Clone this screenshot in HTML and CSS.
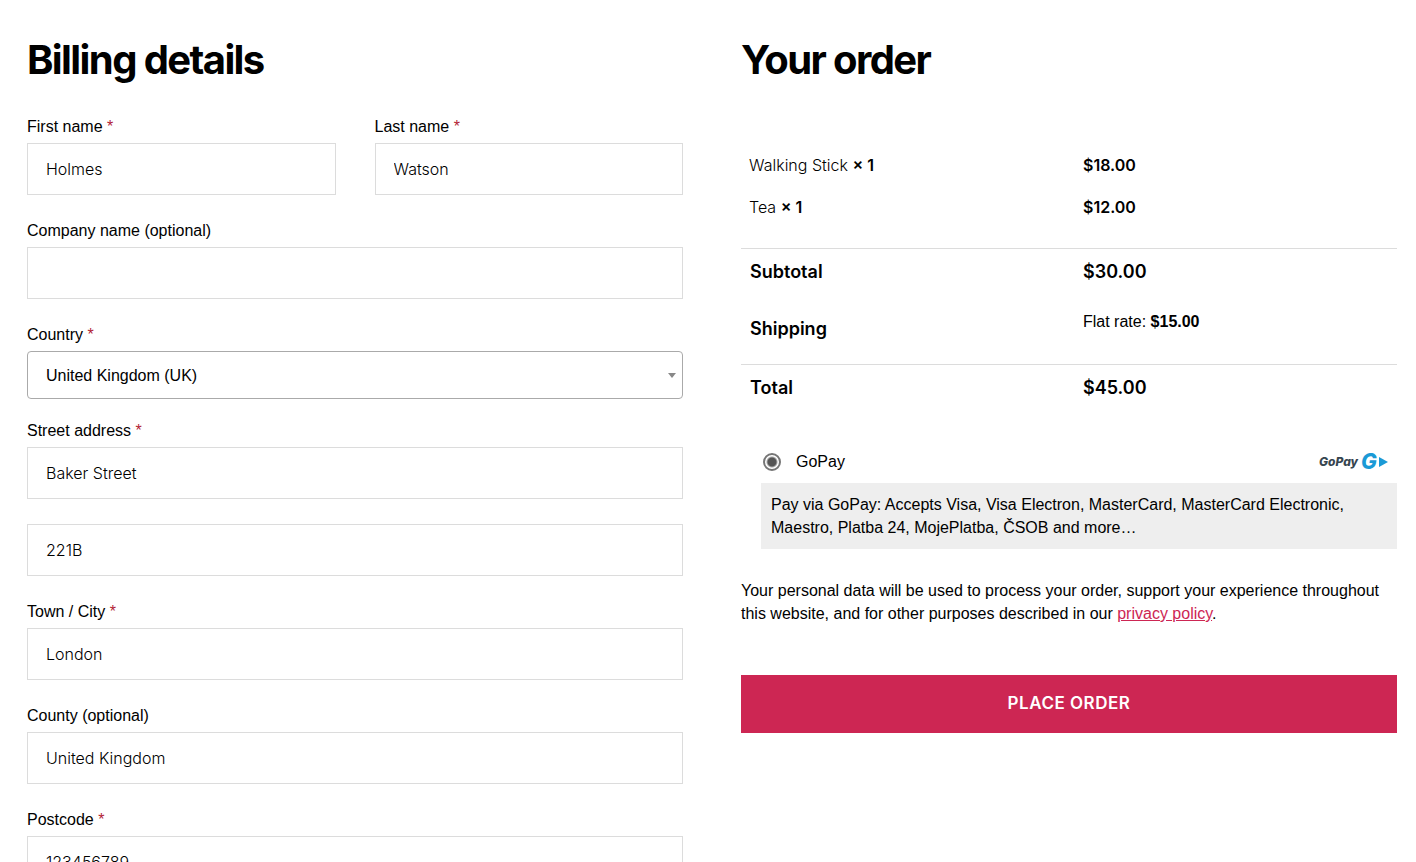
FILE: index.html
```html
<!DOCTYPE html>
<html lang="en">
<head>
  <meta charset="UTF-8">
  <meta name="viewport" content="width=device-width, initial-scale=1.0">
  <title>Checkout</title>
  <link rel="stylesheet" href="styles.css">
</head>
<body>

  <form class="checkout">
    <!-- Billing details -->
    <section class="column">
      <h2>Billing details</h2>

      <div class="field-row">
        <div class="field">
          <label for="firstName">First name <span class="required">*</span></label>
          <input type="text" id="firstName" value="Holmes">
        </div>
        <div class="field">
          <label for="lastName">Last name <span class="required">*</span></label>
          <input type="text" id="lastName" value="Watson">
        </div>
      </div>

      <div class="field">
        <label for="company">Company name (optional)</label>
        <input type="text" id="company">
      </div>

      <div class="field field-select">
        <label for="country">Country <span class="required">*</span></label>
        <div class="select-wrap">
          <select id="country">
            <option selected>United Kingdom (UK)</option>
          </select>
        </div>
      </div>

      <div class="field">
        <label for="address1">Street address <span class="required">*</span></label>
        <input type="text" id="address1" value="Baker Street">
      </div>

      <div class="field">
        <input type="text" id="address2" value="221B" aria-label="Apartment">
      </div>

      <div class="field">
        <label for="city">Town / City <span class="required">*</span></label>
        <input type="text" id="city" value="London">
      </div>

      <div class="field">
        <label for="county">County (optional)</label>
        <input type="text" id="county" value="United Kingdom">
      </div>

      <div class="field">
        <label for="postcode">Postcode <span class="required">*</span></label>
        <input type="text" id="postcode" value="123456789">
      </div>
    </section>

    <!-- Order review -->
    <section class="column">
      <h2>Your order</h2>

      <table class="order-table">
        <tbody>
          <tr>
            <td>Walking Stick <strong>× 1</strong></td>
            <td><strong>$18.00</strong></td>
          </tr>
          <tr>
            <td>Tea <strong>× 1</strong></td>
            <td><strong>$12.00</strong></td>
          </tr>
        </tbody>
        <tfoot>
          <tr class="line">
            <th>Subtotal</th>
            <td>$30.00</td>
          </tr>
          <tr class="shipping">
            <th>Shipping</th>
            <td>Flat rate: <strong>$15.00</strong></td>
          </tr>
          <tr class="line">
            <th>Total</th>
            <td>$45.00</td>
          </tr>
        </tfoot>
      </table>

      <div class="payment">
        <div class="payment-method">
          <input type="radio" id="gopay" name="payment" checked>
          <label for="gopay">GoPay</label>
          <svg class="gopay-logo" width="70" height="32" viewBox="0 0 70 32" aria-hidden="true">
            <text class="logo-name" x="1" y="20">GoPay</text>
            <text class="logo-mark" x="43" y="23">G</text>
            <path d="M61 11 L70 16 L61 21 Z" fill="#1b9ad6"/>
          </svg>
        </div>
        <p class="payment-box">Pay via GoPay: Accepts Visa, Visa Electron, MasterCard, MasterCard Electronic, Maestro, Platba 24, MojePlatba, ČSOB and more…</p>
      </div>

      <p class="privacy">Your personal data will be used to process your order, support your experience throughout this website, and for other purposes described in our <a href="#">privacy policy</a>.</p>

      <button type="submit" class="place-order">Place order</button>
    </section>
  </form>

</body>
</html>
```
FILE: styles.css
```css
* {
  box-sizing: border-box;
}

body {
  margin: 0;
  background-color: #fff;
  color: #000;
  font-family: "Liberation Sans", Arial, sans-serif;
  font-size: 16px;
  line-height: 23px;
}

h2 {
  margin: 0 0 32px;
  font-family: Inter, sans-serif;
  font-size: 40px;
  font-weight: 700;
  line-height: 48px;
  letter-spacing: -0.04em;
}

p {
  margin: 0;
}

/* Two equal columns */
.checkout {
  display: flex;
  gap: 58px;
  padding: 36px 19px 0 27px;
}

.column {
  flex: 1;
  min-width: 0;
}

/* Form fields */
.field-row {
  display: flex;
  gap: 39px;
}

.field {
  flex: 1;
  margin-bottom: 25px;
}

.field-select {
  margin-bottom: 21px;
}

.field label {
  display: block;
  margin-bottom: 6px;
  line-height: 21px;
}

.required {
  color: #b22234;
}

.field input {
  display: block;
  width: 100%;
  height: 52px;
  padding: 0 18px;
  border: 1px solid #dcdcdc;
  border-radius: 0;
  background-color: #fff;
  color: #000;
  font-family: Inter, sans-serif;
  font-size: 16px;
  font-weight: 300;
}

.select-wrap {
  position: relative;
}

.field select {
  display: block;
  width: 100%;
  height: 48px;
  padding: 0 18px;
  border: 1px solid #aaa;
  border-radius: 4px;
  appearance: none;
  background-color: #fff;
  color: #000;
  font-family: inherit;
  font-size: 16px;
}

/* Small arrow of the select */
.select-wrap::after {
  content: "";
  position: absolute;
  top: 22px;
  right: 7px;
  border: 4px solid transparent;
  border-top: 5px solid #888;
  border-bottom: 0;
  pointer-events: none;
}

/* Order table */
.order-table {
  width: 100%;
  margin-top: 60px;
  border-collapse: collapse;
  table-layout: fixed;
  font-family: Inter, sans-serif;
}

.order-table th,
.order-table td {
  width: 50%;
  height: 42px;
  padding: 0 9px;
  text-align: left;
}

.order-table td + td,
.order-table th + td {
  padding-left: 14px;
}

.order-table tbody td {
  font-weight: 300;
}

.order-table tbody td:first-child {
  padding-left: 8px;
}

.order-table tbody strong {
  font-weight: 600;
}

.order-table tbody tr:last-child td {
  height: 62px;
  padding-bottom: 18px;
}

.order-table tfoot th,
.order-table tfoot td {
  height: 46px;
  font-size: 18px;
  font-weight: 600;
}

.order-table .line {
  border-top: 1px solid #dcdcdc;
}

.order-table .shipping th {
  height: 70px;
}

.order-table .shipping td {
  padding-bottom: 14px;
  font-family: "Liberation Sans", Arial, sans-serif;
  font-size: 16px;
  font-weight: 400;
}

.order-table .shipping strong {
  font-weight: 700;
}

/* Payment method */
.payment {
  margin: 40px 0 30px 20px;
}

.payment-method {
  display: flex;
  align-items: center;
  height: 23px;
  margin-bottom: 10px;
  padding: 0 9px 0 2px;
}

.payment-method input {
  appearance: none;
  width: 18px;
  height: 18px;
  margin: 0 15px 0 0;
  border: 2px solid #767676;
  border-radius: 50%;
  background: radial-gradient(circle, #555 4px, #fff 6px);
}

.gopay-logo {
  margin-left: auto;
}

.logo-name {
  fill: #36454f;
  font-family: Inter, sans-serif;
  font-size: 12px;
  font-style: italic;
  font-weight: 800;
}

.logo-mark {
  fill: #1b9ad6;
  font-family: Inter, sans-serif;
  font-size: 21px;
  font-style: italic;
  font-weight: 800;
}

.payment-box {
  padding: 10px;
  background-color: #eee;
}

.privacy a {
  color: #cd2653;
  text-decoration: underline;
}

.place-order {
  display: block;
  width: 100%;
  height: 58px;
  margin-top: 50px;
  padding: 0 0 2px;
  border: 0;
  border-radius: 0;
  background-color: #cd2653;
  color: #fff;
  cursor: pointer;
  font-family: Inter, sans-serif;
  font-size: 17px;
  font-weight: 600;
  letter-spacing: 0.03em;
  text-transform: uppercase;
}
```
